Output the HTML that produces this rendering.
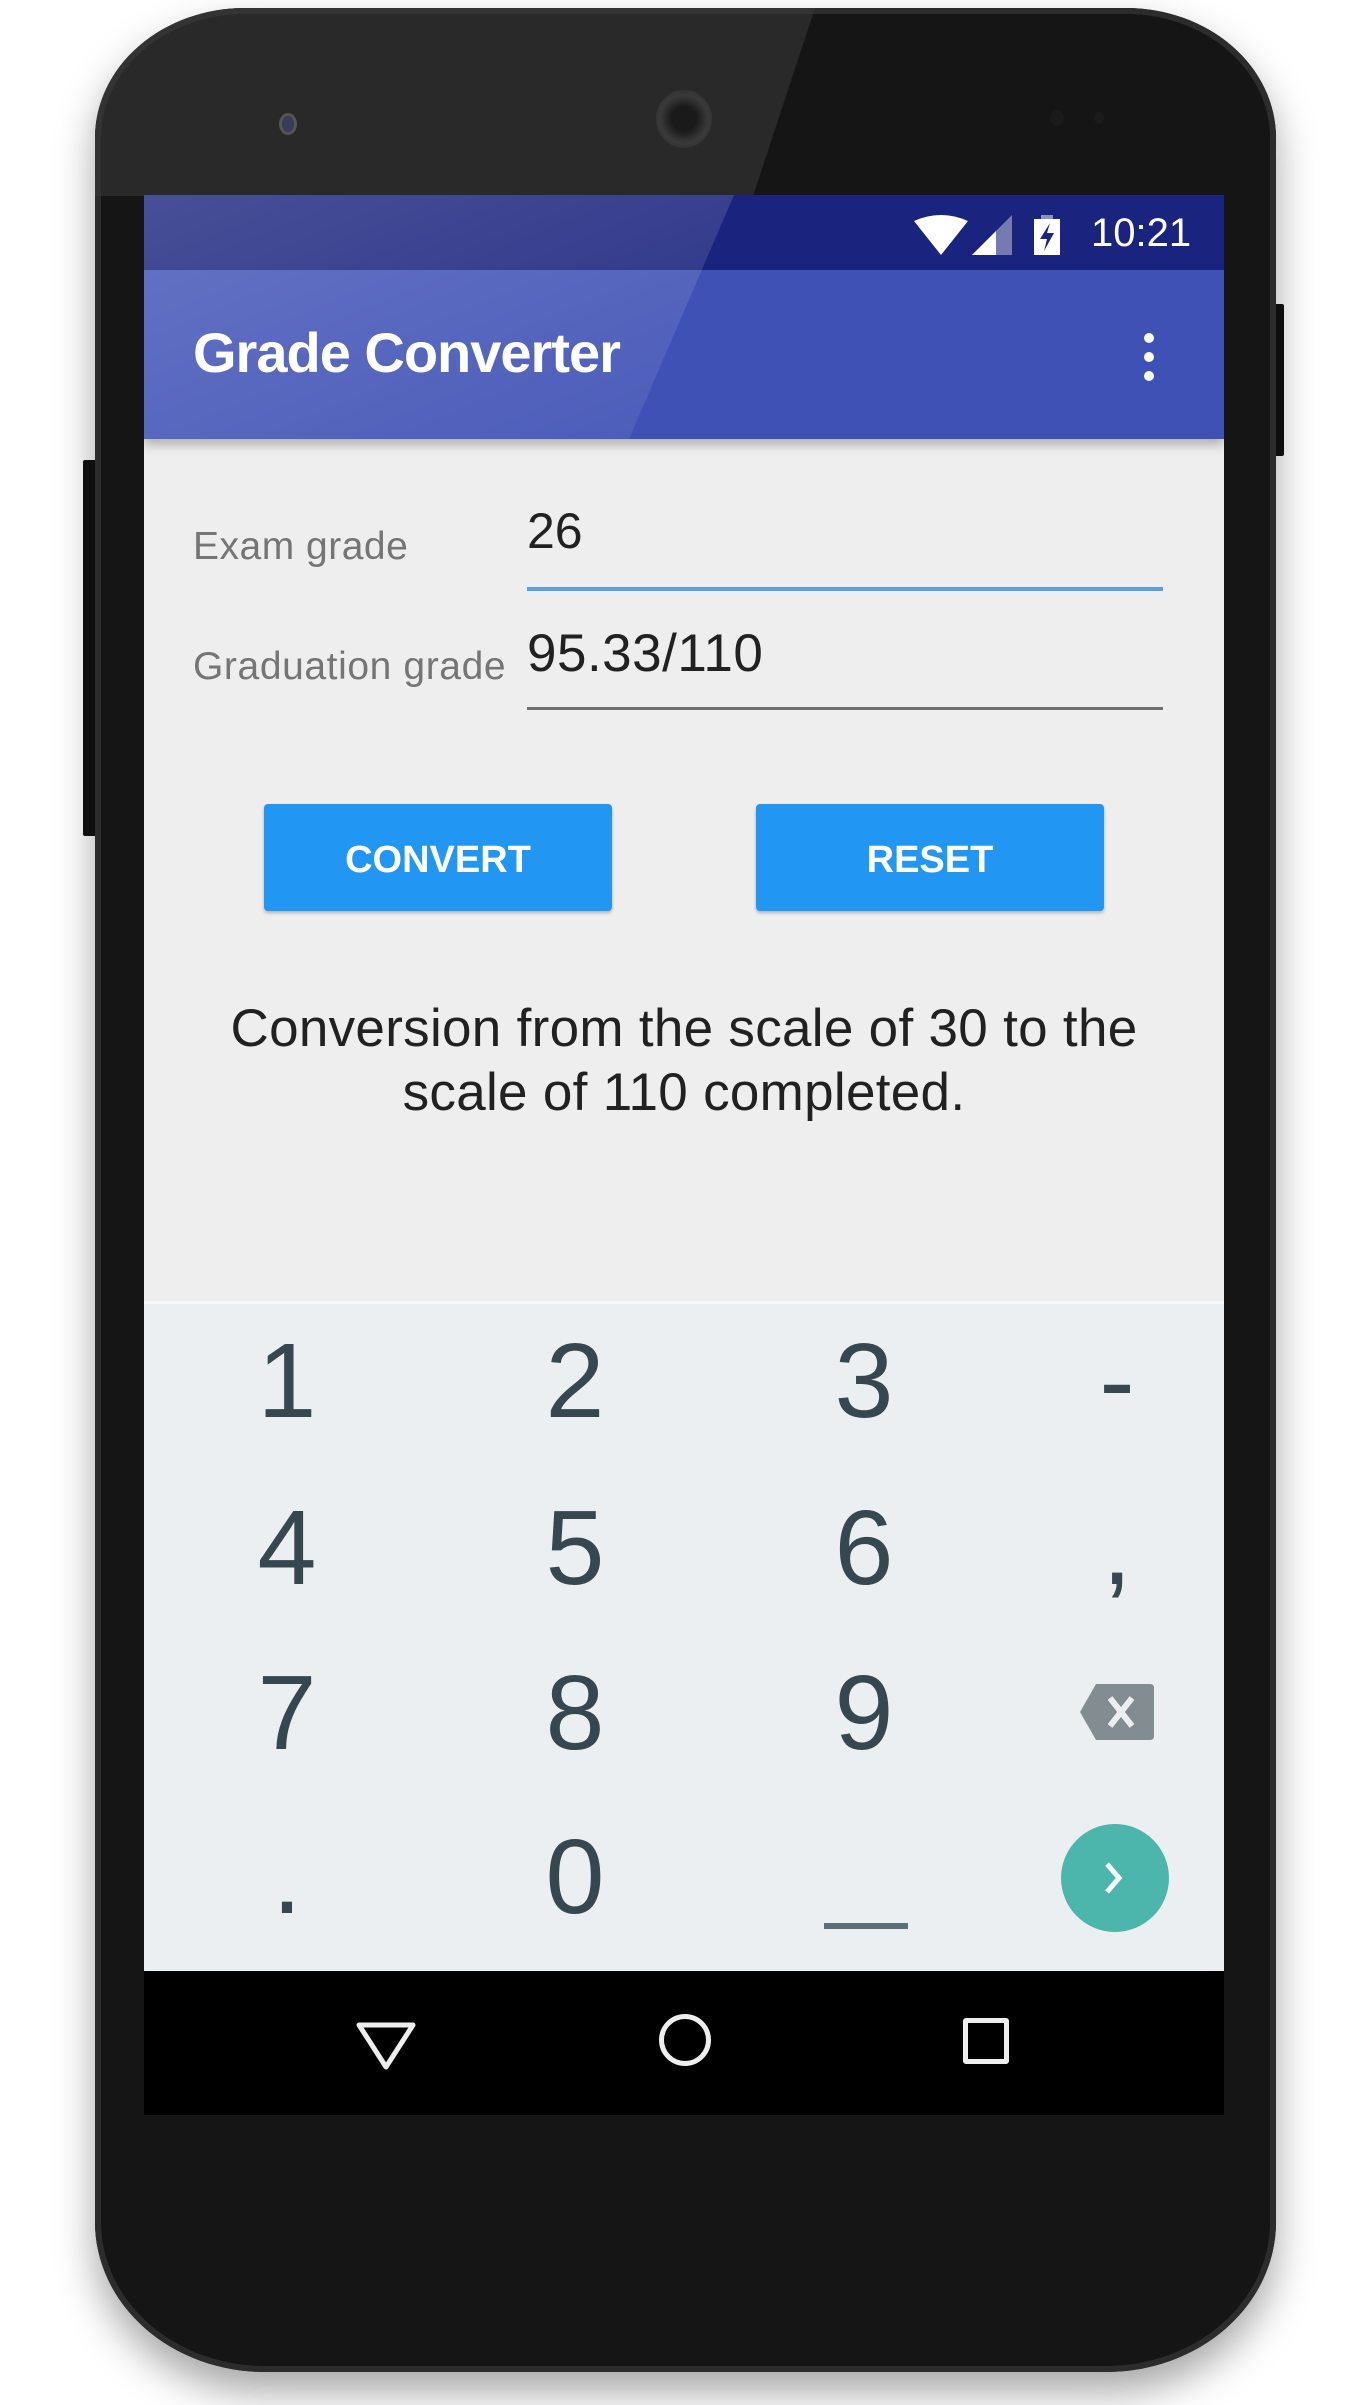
<!DOCTYPE html>
<html><head><meta charset="utf-8">
<style>
*{margin:0;padding:0;box-sizing:border-box}
body{width:1370px;height:2405px;background:#fff;position:relative;overflow:hidden;font-family:"Liberation Sans",sans-serif}
.abs{position:absolute}
.phone{left:95px;top:8px;width:1181px;height:2364px;border-radius:150px 150px 170px 170px/130px 130px 150px 150px;background:#151515;box-shadow:0 20px 40px rgba(0,0,0,.35),inset 0 0 0 6px #2c2c2c;overflow:hidden}
.screen{left:144px;top:195px;width:1080px;height:1920px;background:#eeeeee;overflow:hidden}
.digit{position:absolute;width:200px;text-align:center;font-size:106px;color:#37474f;line-height:1}
</style></head><body>
<div class="abs" style="left:1274px;top:304px;width:10px;height:152px;background:#111;border-radius:2px"></div>
<div class="abs" style="left:83px;top:460px;width:14px;height:376px;background:#111;border-radius:2px"></div>
<div class="abs phone">
  <svg width="1181" height="2364" style="position:absolute;left:0;top:0">
    <polygon points="0,0 720,0 658,188 0,188" fill="#3a3a3a" opacity=".55"/>
  </svg>
</div>
<div class="abs" style="left:279px;top:113px;width:18px;height:22px;border-radius:50%;background:#3a3a5a;border:3px solid #555"></div>
<div class="abs" style="left:656px;top:90px;width:56px;height:58px;border-radius:50%;background:radial-gradient(circle,#1a1a1a 30%,#3a3a3a 60%,#222 100%)"></div>
<div class="abs" style="left:1050px;top:110px;width:14px;height:16px;border-radius:50%;background:#1a1a1a"></div>
<div class="abs" style="left:1094px;top:112px;width:10px;height:12px;border-radius:50%;background:#1a1a1a"></div>

<div class="abs screen">
  <div class="abs" style="left:0;top:0;width:1080px;height:75px;background:#1a237e"></div>
  <div class="abs" style="left:0;top:75px;width:1080px;height:169px;background:#3f51b5;box-shadow:0 6px 10px rgba(0,0,0,.25)"></div>
  <svg class="abs" style="left:0;top:0" width="1080" height="244">
    <defs><linearGradient id="g" x1="0" y1="0" x2="1" y2="1"><stop offset="0" stop-color="#fff" stop-opacity=".2"/><stop offset="1" stop-color="#fff" stop-opacity=".06"/></linearGradient></defs>
    <polygon points="0,0 590,0 485,244 0,244" fill="url(#g)"/>
  </svg>
  <svg class="abs" style="left:770px;top:20px" width="160" height="42">
    <path d="M0,6 Q27,-6 54,6 L27,40 Z" fill="#fff"/>
    <polygon points="58,40 98,0 98,40" fill="#fff" opacity=".4"/>
    <polygon points="58,40 82,16 82,40" fill="#fff"/>
    <rect x="120" y="4" width="26" height="36" fill="#fff"/>
    <rect x="127" y="0" width="12" height="5" fill="#fff" opacity=".5"/>
    <polygon points="136,8 126,24 133,24 130,36 140,18 133,18" fill="#1a237e"/>
  </svg>
  <div class="abs" style="left:947px;top:16px;font-size:40px;color:#fff;line-height:44px">10:21</div>
  <div class="abs" style="left:49px;top:128px;font-size:56px;color:#fff;font-weight:bold;line-height:60px;letter-spacing:-1px">Grade Converter</div>
  <div class="abs" style="left:1000px;top:138px;width:10px;height:10px;border-radius:50%;background:#fff"></div>
  <div class="abs" style="left:1000px;top:157px;width:10px;height:10px;border-radius:50%;background:#fff"></div>
  <div class="abs" style="left:1000px;top:176px;width:10px;height:10px;border-radius:50%;background:#fff"></div>

  <div class="abs" style="left:49px;top:330px;font-size:39px;color:#757575;line-height:44px;letter-spacing:.5px">Exam grade</div>
  <div class="abs" style="left:383px;top:308px;font-size:50px;color:#212121;line-height:56px">26</div>
  <div class="abs" style="left:383px;top:392px;width:636px;height:4px;background:#5c9fe0"></div>
  <div class="abs" style="left:49px;top:450px;font-size:39px;color:#757575;line-height:44px;letter-spacing:.6px">Graduation grade</div>
  <div class="abs" style="left:383px;top:430px;font-size:53px;color:#212121;line-height:58px;letter-spacing:.5px">95.33/110</div>
  <div class="abs" style="left:383px;top:512px;width:636px;height:3px;background:#707070"></div>

  <div class="abs" style="left:120px;top:609px;width:348px;height:107px;background:#2196f3;border-radius:4px;box-shadow:0 2px 3px rgba(0,0,0,.25);color:#fff;font-size:38px;font-weight:bold;text-align:center;line-height:112px">CONVERT</div>
  <div class="abs" style="left:612px;top:609px;width:348px;height:107px;background:#2196f3;border-radius:4px;box-shadow:0 2px 3px rgba(0,0,0,.25);color:#fff;font-size:38px;font-weight:bold;text-align:center;line-height:112px">RESET</div>

  <div class="abs" style="left:0;top:802px;width:1080px;text-align:center;font-size:53px;color:#212121;line-height:64px;letter-spacing:.3px">Conversion from the scale of 30 to the<br>scale of 110 completed.</div>

  <div class="abs" style="left:0;top:1106px;width:1080px;height:670px;background:#eceff1;border-top:3px solid #f7f8f9">
    <div class="digit" style="left:43px;top:24px">1</div>
    <div class="digit" style="left:331px;top:24px">2</div>
    <div class="digit" style="left:620px;top:24px">3</div>
    <div class="digit" style="left:873px;top:24px">-</div>
    <div class="digit" style="left:43px;top:191px">4</div>
    <div class="digit" style="left:331px;top:191px">5</div>
    <div class="digit" style="left:620px;top:191px">6</div>
    <div class="digit" style="left:873px;top:191px">,</div>
    <div class="digit" style="left:43px;top:356px">7</div>
    <div class="digit" style="left:331px;top:356px">8</div>
    <div class="digit" style="left:620px;top:356px">9</div>
    <div class="digit" style="left:43px;top:520px">.</div>
    <div class="digit" style="left:331px;top:520px">0</div>
    <div class="abs" style="left:680px;top:619px;width:84px;height:6px;background:#5f6e76"></div>
    <svg class="abs" style="left:936px;top:380px" width="74" height="56">
      <path d="M16,0 H70 Q74,0 74,4 V52 Q74,56 70,56 H16 L0,28 Z" fill="#838c91"/>
      <path d="M30,14 L52,42 M52,14 L30,42" stroke="#eceff1" stroke-width="6"/>
    </svg>
    <div class="abs" style="left:917px;top:520px;width:108px;height:108px;border-radius:50%;background:#4db6ac"></div>
    <svg class="abs" style="left:955px;top:554px" width="30" height="40"><path d="M8,6 L20,20 L8,34" stroke="#fff" stroke-width="5" fill="none"/></svg>
  </div>

  <div class="abs" style="left:0;top:1776px;width:1080px;height:144px;background:#000">
    <svg class="abs" style="left:211px;top:50px" width="64" height="50"><polygon points="4,4 58,4 31,46" fill="none" stroke="#eee" stroke-width="5" stroke-linejoin="round"/></svg>
    <div class="abs" style="left:515px;top:43px;width:52px;height:52px;border-radius:50%;border:5px solid #eee"></div>
    <div class="abs" style="left:819px;top:47px;width:46px;height:46px;border:5px solid #eee;border-radius:3px"></div>
  </div>
</div>
</body></html>
